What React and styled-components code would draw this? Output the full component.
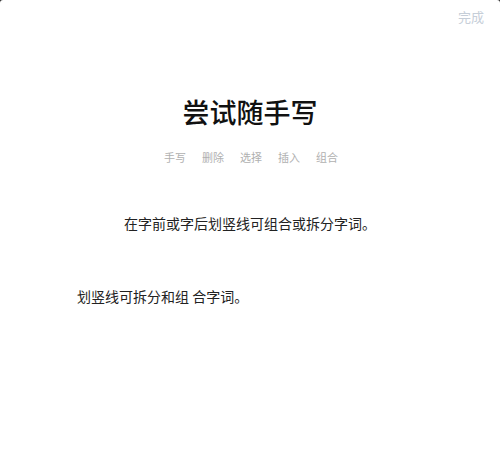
import React from "react";
import styled, { createGlobalStyle } from "styled-components";

const Global = createGlobalStyle`
  html, body { margin: 0; padding: 0; background: #2a2a2a; }
  body { font-family: "Noto Sans CJK SC", "Noto Sans", sans-serif; }
  * { box-sizing: border-box; }
`;

const Sheet = styled.div`
  width: 500px;
  height: 475px;
  background: #fff;
  border-radius: 3px 3px 0 0;
  display: flex;
  flex-direction: column;
  overflow: hidden;
`;

const TopBar = styled.div`
  display: flex;
  justify-content: flex-end;
  padding: 7px 16px 0 0;
  height: 60px;
`;

const DoneButton = styled.button`
  border: none;
  background: none;
  padding: 0;
  font-family: inherit;
  font-size: 13px;
  line-height: 20px;
  height: 20px;
  color: #c6ced8;
  cursor: pointer;
`;

const Title = styled.h1`
  margin: 34px 0 0;
  text-align: center;
  font-size: 27px;
  font-weight: 500;
  line-height: 36px;
  color: #111;
`;

const Tabs = styled.div`
  display: flex;
  justify-content: center;
  gap: 16px;
  margin-top: 19px;
  padding-left: 2px;
`;

const Tab = styled.span`
  font-size: 11px;
  line-height: 16px;
  color: #b0b0b0;
`;

const Hint = styled.p`
  margin: ${(p) => p.$top}px 0 0;
  padding-left: ${(p) => p.$indent || 0}px;
  text-align: ${(p) => p.$align || "left"};
  font-size: 14px;
  line-height: 20px;
  color: #222;
  white-space: pre;
`;

const tabs = ["手写", "删除", "选择", "插入", "组合"];

export default function App() {
  return (
    <>
      <Global />
      <Sheet>
        <TopBar>
          <DoneButton>完成</DoneButton>
        </TopBar>
        <Title>尝试随手写</Title>
        <Tabs>
          {tabs.map((t) => (
            <Tab key={t}>{t}</Tab>
          ))}
        </Tabs>
        <Hint $top={48} $align="center">在字前或字后划竖线可组合或拆分字词。</Hint>
        <Hint $top={53} $indent={77}>划竖线可拆分和组 合字词。</Hint>
      </Sheet>
    </>
  );
}
